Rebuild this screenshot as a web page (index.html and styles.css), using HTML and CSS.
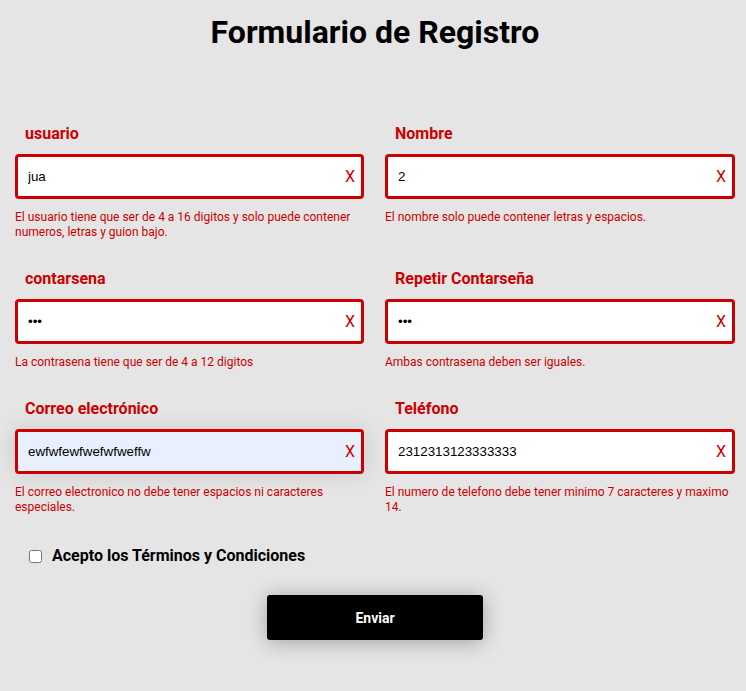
FILE: index.html
```html
<!DOCTYPE html>
<html lang="es">
<head>
<meta charset="utf-8">
<title>Formulario de Registro</title>
<link rel="stylesheet" href="styles.css">
</head>
<body>
<main class="page">
  <h1 class="title">Formulario de Registro</h1>
  <form class="form">
    <div class="grid">
      <div class="field">
        <label class="label" for="usuario">usuario</label>
        <div class="input-wrap">
          <input class="input" id="usuario" type="text" value="jua">
          <span class="mark">X</span>
        </div>
        <p class="error">El usuario tiene que ser de 4 a 16 digitos y solo puede contener numeros, letras y guion bajo.</p>
      </div>
      <div class="field">
        <label class="label" for="nombre">Nombre</label>
        <div class="input-wrap">
          <input class="input" id="nombre" type="text" value="2">
          <span class="mark">X</span>
        </div>
        <p class="error">El nombre solo puede contener letras y espacios.</p>
      </div>
      <div class="field">
        <label class="label" for="pass">contarsena</label>
        <div class="input-wrap">
          <input class="input" id="pass" type="password" value="abc">
          <span class="mark">X</span>
        </div>
        <p class="error">La contrasena tiene que ser de 4 a 12 digitos</p>
      </div>
      <div class="field">
        <label class="label" for="pass2">Repetir Contarseña</label>
        <div class="input-wrap">
          <input class="input" id="pass2" type="password" value="abc">
          <span class="mark">X</span>
        </div>
        <p class="error">Ambas contrasena deben ser iguales.</p>
      </div>
      <div class="field">
        <label class="label" for="correo">Correo electrónico</label>
        <div class="input-wrap input-wrap--focus">
          <input class="input input--filled" id="correo" type="text" value="ewfwfewfwefwfweffw" autofocus>
          <span class="mark">X</span>
        </div>
        <p class="error">El correo electronico no debe tener espacios ni caracteres especiales.</p>
      </div>
      <div class="field">
        <label class="label" for="tel">Teléfono</label>
        <div class="input-wrap">
          <input class="input" id="tel" type="text" value="2312313123333333">
          <span class="mark">X</span>
        </div>
        <p class="error">El numero de telefono debe tener minimo 7 caracteres y maximo 14.</p>
      </div>
    </div>
    <label class="terms">
      <input class="check" type="checkbox">
      <span>Acepto los Términos y Condiciones</span>
    </label>
    <div class="actions">
      <button class="submit" type="button">Enviar</button>
    </div>
  </form>
</main>
</body>
</html>
```
FILE: styles.css
```css
* { box-sizing: border-box; }

html, body {
  margin: 0;
  padding: 0;
  background: #e5e5e5;
  font-family: Roboto, "Liberation Sans", sans-serif;
}

.page {
  width: 720px;
  margin-left: 15px;
  padding-top: 14px;
  padding-bottom: 40px;
}

.title {
  margin: 0;
  text-align: center;
  font-size: 32px;
  font-weight: 700;
  line-height: 37px;
  color: #000;
}

.form {
  margin-top: 73px;
}

.grid {
  display: grid;
  grid-template-columns: 349px 350px;
  column-gap: 21px;
  row-gap: 29px;
}

.field {
  display: flex;
  flex-direction: column;
}

.label {
  display: block;
  padding-left: 10px;
  margin-bottom: 10px;
  font-size: 16px;
  line-height: 20px;
  font-weight: 700;
  color: #cc0000;
}

.input-wrap {
  position: relative;
  height: 45px;
  border: 3px solid #cc0000;
  border-radius: 4px;
  background: #fff;
}

.input-wrap--focus {
  background: #e8f0fe;
  box-shadow: 0 0 22px rgba(0, 0, 0, 0.12);
}

.input {
  display: block;
  width: 100%;
  height: 100%;
  border: 0;
  outline: none;
  padding: 0 30px 0 10px;
  background: transparent;
  font-family: "Liberation Sans", Arial, sans-serif;
  font-size: 13.333px;
  color: #000;
  caret-color: #000;
}

.input--filled { background: #e8f0fe; }

.mark {
  position: absolute;
  right: 6px;
  top: 50%;
  transform: translateY(-50%);
  font-size: 16px;
  line-height: 1;
  color: #cc0000;
}

.error {
  margin: 11px 0 0;
  font-size: 12px;
  line-height: 15px;
  color: #cc0000;
}

.terms {
  display: flex;
  align-items: center;
  margin-top: 31px;
  padding-left: 10px;
  font-size: 16px;
  font-weight: 700;
  line-height: 20px;
  color: #000;
}

.check {
  width: 13px;
  height: 13px;
  margin: 0 10px 0 4px;
}

.actions {
  display: flex;
  justify-content: center;
  margin-top: 29px;
}

.submit {
  width: 216px;
  height: 45px;
  border: 0;
  border-radius: 3px;
  background: #000;
  color: #fff;
  font-family: Roboto, "Liberation Sans", sans-serif;
  font-size: 14px;
  font-weight: 700;
  box-shadow: 0 2px 20px rgba(0, 0, 0, 0.3);
}
```
